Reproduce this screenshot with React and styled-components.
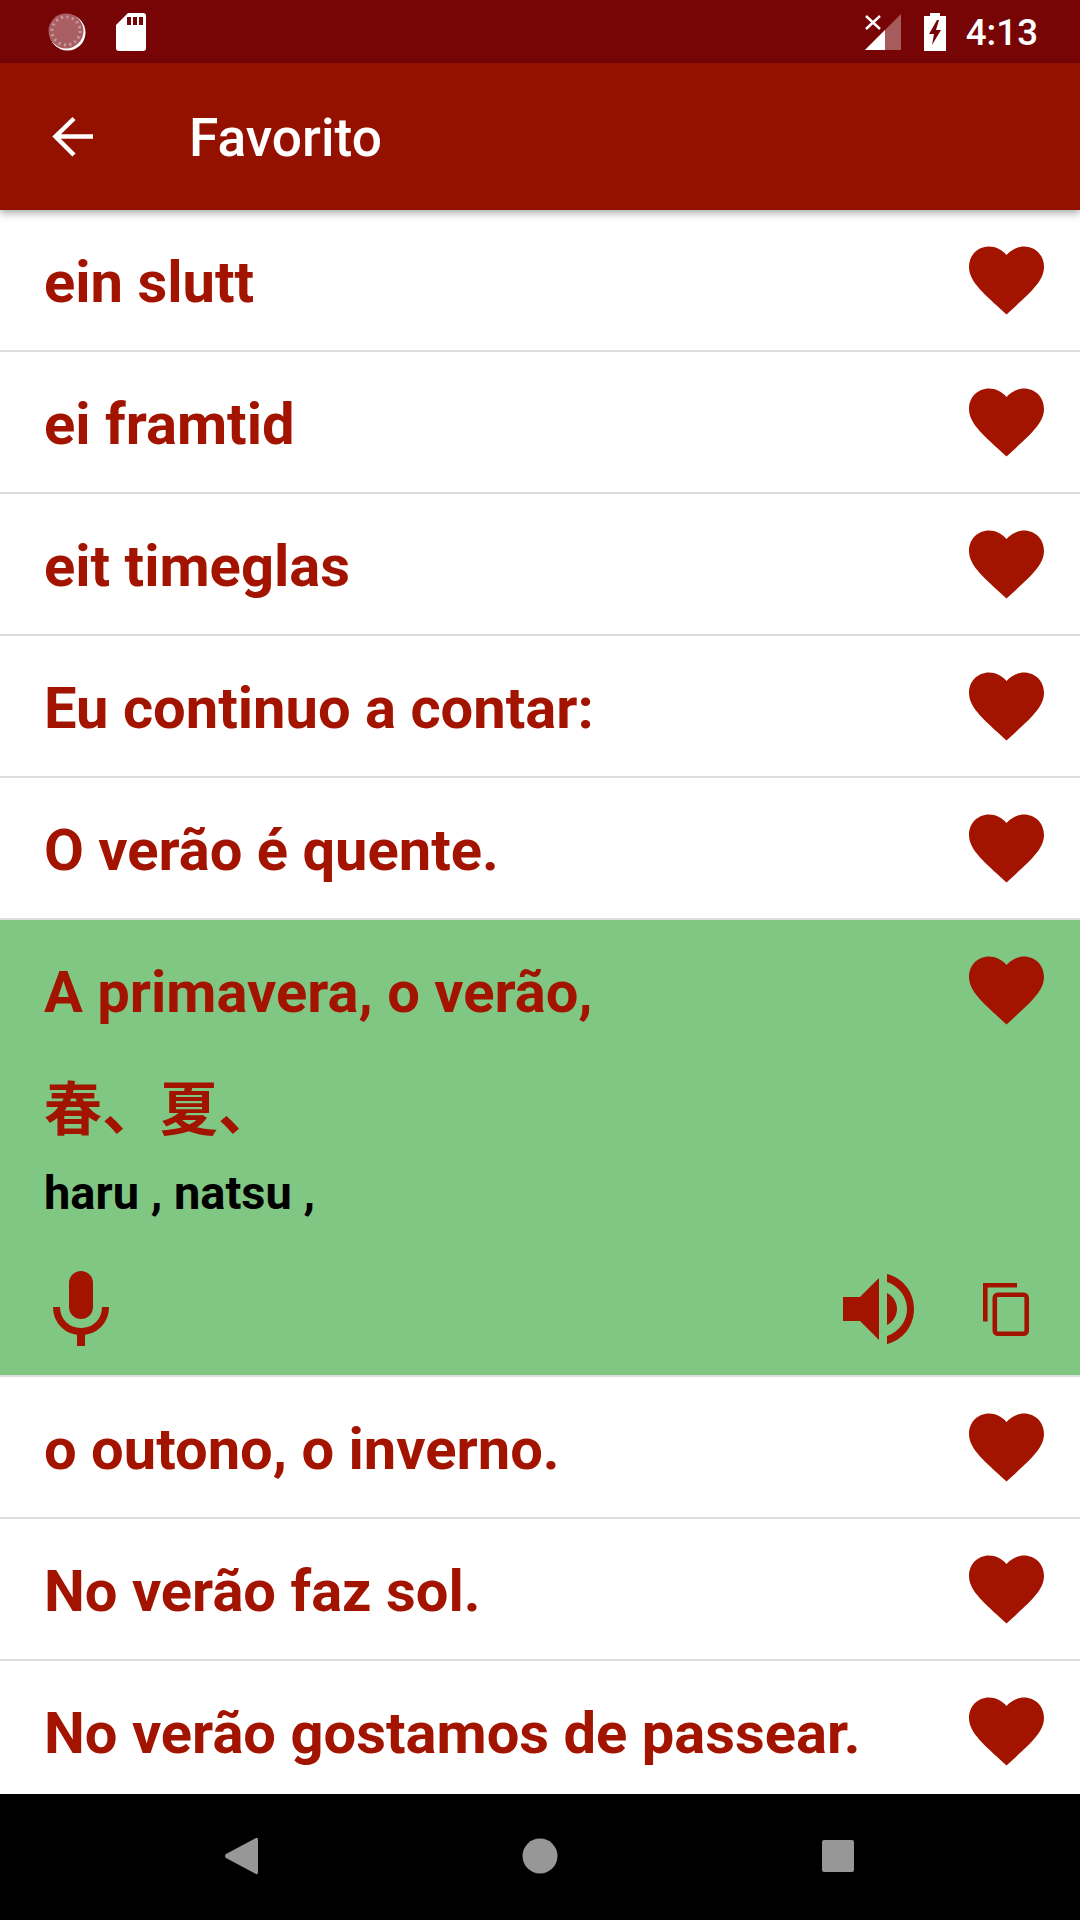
import React from 'react';
import styled, { createGlobalStyle } from 'styled-components';

const Global = createGlobalStyle`
  html, body { margin: 0; padding: 0; background: #fff; }
  * { box-sizing: border-box; }
`;
const RED = '#a31400';

const Page = styled.div`
  width: 1080px; height: 1920px; display: flex; flex-direction: column; overflow: hidden;
  font-family: Roboto, "Noto Sans CJK JP", sans-serif; background: #fff;
`;
const StatusBar = styled.div`
  height: 63px; flex: none; background: #770505; display: flex; align-items: center;
  padding: 0 42px 0 48px; color: #fff; position: relative;
`;
const StatusLeft = styled.div`display: flex; align-items: center; gap: 30px; flex: 1;`;
const StatusRight = styled.div`display: flex; align-items: center;`;
const Clock = styled.span`font-size: 36.7px; font-weight: 500; margin: 2px 0 0 20px; line-height: 61px; color: #fff;`;
const Toolbar = styled.div`
  height: 147px; flex: none; background: #941100; display: flex; align-items: center; padding-left: 52px;
  box-shadow: 0 3px 8px rgba(0,0,0,.35); position: relative; z-index: 2;
`;
const Title = styled.h1`margin: 5px 0 0 95px; font-size: 53.3px; font-weight: 500; color: #fff; line-height: 1;`;
const List = styled.div`flex: 1; display: flex; flex-direction: column; overflow: hidden;`;
const Row = styled.div`
  height: 142px; flex: none; display: flex; align-items: center; justify-content: space-between;
  padding: 0 36px 0 44px; border-bottom: 2px solid #dedede; background: #fff;
`;
const Phrase = styled.span`font-size: 57.9px; font-weight: 700; color: ${RED}; line-height: 1; white-space: nowrap; position: relative; top: 3px;`;
const Expanded = styled.div`
  height: 457px; flex: none; background: #81c784; padding: 0 36px 0 44px; display: flex; flex-direction: column;
  border-bottom: 2px solid #dedede;
`;
const ExpandedHead = styled.div`height: 140px; flex: none; display: flex; align-items: center; justify-content: space-between;`;
const Kanji = styled.div`font-size: 58px; font-weight: 700; color: ${RED}; line-height: 60px; margin-top: 15px; font-family: "Noto Sans CJK JP", sans-serif;`;
const Romaji = styled.div`font-size: 47px; font-weight: 700; color: #000; line-height: 50px; margin-top: 33px;`;
const Actions = styled.div`display: flex; align-items: center; margin-top: 45px; height: 90px;`;
const Spacer = styled.div`flex: 1;`;
const NavBar = styled.div`
  height: 126px; flex: none; background: #000; display: flex; align-items: center; justify-content: center; gap: 0;
`;
const NavSlot = styled.div`width: 298px; display: flex; justify-content: center; align-items: center; margin-top: -2px;`;

const Heart = () => (
  <svg width="75" height="69" viewBox="0 0 75 69" style={{ flex: 'none' }}>
    <path d="M37.5 68.5 L32 63.4 C12 45.3 0 34.4 0 20.8 C0 9.3 8.6 0.5 20 0.5 C26.6 0.5 33 3.7 37.5 9 C42 3.7 48.4 0.5 55 0.5 C66.4 0.5 75 9.3 75 20.8 C75 34.4 63 45.3 43 63.4 Z" fill={RED} />
  </svg>
);

const Row1 = ({ children }) => (
  <Row><Phrase>{children}</Phrase><Heart /></Row>
);

const Mic = () => (
  <svg width="56" height="75" viewBox="0 0 56 75" style={{ marginLeft: 9 }}>
    <rect x="16" y="0" width="24" height="48" rx="12" fill={RED} />
    <path d="M3.5 36 C3.5 50 14 60.5 28 60.5 C42 60.5 52.5 50 52.5 36" fill="none" stroke={RED} strokeWidth="7" />
    <rect x="24" y="60" width="8" height="15" fill={RED} />
  </svg>
);
const Speaker = () => (
  <svg width="72" height="70" viewBox="0 0 72 70" style={{ marginTop: 2 }}>
    <path d="M0 23 H17 L36 4 V66 L17 47 H0 Z" fill={RED} />
    <path d="M44 19 C50 22 54 28 54 35 C54 42 50 48 44 51 Z" fill={RED} />
    <path d="M44 0 C60 4 71 18 71 35 C71 52 60 66 44 70 V62 C56 58 64 47 64 35 C64 23 56 12 44 8 Z" fill={RED} />
  </svg>
);
const Copy = () => (
  <svg width="46" height="53" viewBox="0 0 46 53" style={{ marginLeft: 68, marginRight: 15, marginTop: 3 }}>
    <path d="M34 2.3 H2.3 V38.5" fill="none" stroke={RED} strokeWidth="4.6" />
    <rect x="11.8" y="11.8" width="31.9" height="38.9" rx="3" fill="none" stroke={RED} strokeWidth="4.6" />
  </svg>
);

const Spinner = () => (
  <svg width="38" height="38" viewBox="0 0 38 38">
    <circle cx="19.5" cy="19.5" r="18" fill="#fff" />
    <circle cx="18" cy="18" r="17.5" fill="#a85e62" />
    <circle cx="18" cy="18" r="14" fill="none" stroke="#c99a9d" strokeWidth="3" strokeDasharray="2 3.5" />
  </svg>
);
const SdCard = () => (
  <svg width="30" height="38" viewBox="0 0 30 38">
    <path d="M12 0 H27 Q30 0 30 3 V35 Q30 38 27 38 H3 Q0 38 0 35 V12 Z" fill="#fff" />
    <rect x="11" y="4" width="4" height="8" fill="#770505" />
    <rect x="17" y="4" width="4" height="8" fill="#770505" />
    <rect x="23" y="4" width="4" height="8" fill="#770505" />
  </svg>
);
const Signal = () => (
  <svg width="36" height="36" viewBox="0 0 36 36">
    <path d="M0 36 L36 0 V36 Z" fill="#fff" fillOpacity=".35" />
    <path d="M0 36 L20 16 V36 Z" fill="#fff" />
    <path d="M1 2 L15 15 M15 2 L1 15" stroke="#fff" strokeWidth="2.4" />
  </svg>
);
const Battery = () => (
  <svg width="22" height="38" viewBox="0 0 22 38" style={{ marginLeft: 23 }}>
    <path d="M6 0 H16 V3 H22 V38 H0 V3 H6 Z" fill="#fff" />
    <path d="M13 7 L5 21 H10 L8 32 L17 17 H12 L15 7 Z" fill="#770505" />
  </svg>
);
const BackArrow = () => (
  <svg width="42" height="42" viewBox="0 0 42 42">
    <path d="M41 20.5 H4 M22 2.5 L3.5 20.5 L22 39" fill="none" stroke="#fff" strokeWidth="4.5" />
  </svg>
);

export default function App() {
  return (
    <Page>
      <Global />
      <StatusBar>
        <StatusLeft><Spinner /><SdCard /></StatusLeft>
        <StatusRight><Signal /><Battery /><Clock>4:13</Clock></StatusRight>
      </StatusBar>
      <Toolbar>
        <BackArrow />
        <Title>Favorito</Title>
      </Toolbar>
      <List>
        <Row1>ein slutt</Row1>
        <Row1>ei framtid</Row1>
        <Row1>eit timeglas</Row1>
        <Row1>Eu continuo a contar:</Row1>
        <Row1>O verão é quente.</Row1>
        <Expanded>
          <ExpandedHead><Phrase>A primavera, o verão,</Phrase><Heart /></ExpandedHead>
          <Kanji>春、夏、</Kanji>
          <Romaji>haru , natsu ,</Romaji>
          <Actions><Mic /><Spacer /><Speaker /><Copy /></Actions>
        </Expanded>
        <Row1>o outono, o inverno.</Row1>
        <Row1>No verão faz sol.</Row1>
        <Row1>No verão gostamos de passear.</Row1>
      </List>
      <NavBar>
        <NavSlot>
          <svg width="36" height="38" viewBox="0 0 36 38"><path d="M32 1 Q34 0 34 3 V35 Q34 38 32 37 L2 21 Q0 19 2 17 Z" fill="#979797" /></svg>
        </NavSlot>
        <NavSlot>
          <svg width="36" height="36" viewBox="0 0 36 36"><circle cx="18" cy="18" r="17.5" fill="#979797" /></svg>
        </NavSlot>
        <NavSlot>
          <svg width="34" height="34" viewBox="0 0 34 34"><rect x="1" y="1" width="32" height="32" rx="2" fill="#979797" /></svg>
        </NavSlot>
      </NavBar>
    </Page>
  );
}
